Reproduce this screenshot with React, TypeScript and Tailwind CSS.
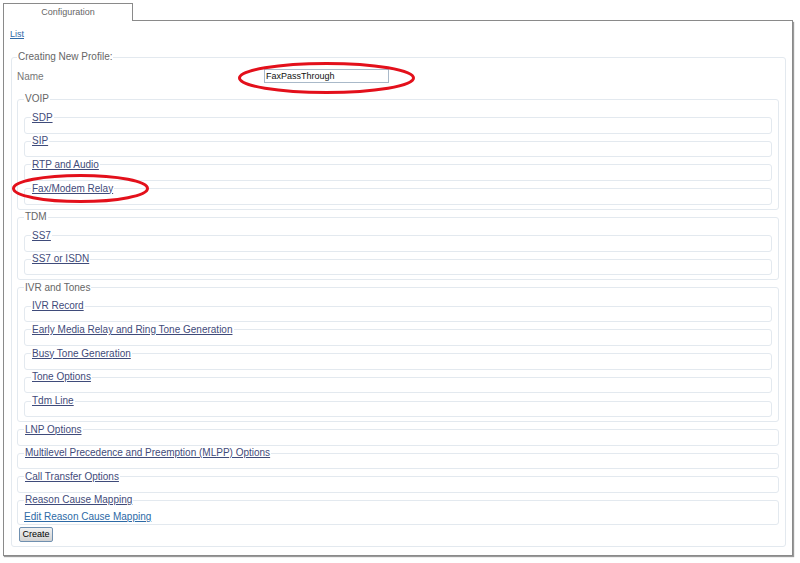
import React from "react";

const voip = ["SDP", "SIP", "RTP and Audio", "Fax/Modem Relay"];
const tdm = ["SS7", "SS7 or ISDN"];
const ivr = [
  "IVR Record",
  "Early Media Relay and Ring Tone Generation",
  "Busy Tone Generation",
  "Tone Options",
  "Tdm Line",
];

const LinkBox = ({ label }: { label: string }) => (
  <fieldset className="border border-[#e3e9ef] rounded-[3px] pl-[6px] pb-[9px]">
    <legend className="px-[1px] leading-[12px]">
      <a href="#" className="text-[#3f4b7a] underline">
        {label}
      </a>
    </legend>
  </fieldset>
);

const Group = ({ title, items }: { title: string; items: string[] }) => (
  <fieldset className="border border-[#e3e9ef] rounded-[3px] px-[6px] pt-[6.5px] pb-[4px]">
    <legend className="px-[1px] leading-[12px] text-[#666]">{title}</legend>
    <div className="flex flex-col gap-[1.7px]">
      {items.map((i) => (
        <LinkBox key={i} label={i} />
      ))}
    </div>
  </fieldset>
);

export default function App() {
  return (
    <div className="relative w-[800px] h-[563px] bg-white pl-[3px] pt-[3px] text-[10px] font-['Liberation_Sans',Arial,sans-serif]">
      <div className="flex h-[18px] w-[790px]">
        <div className="w-[130px] border border-b-0 border-[#8a8a8a] text-center text-[9px] leading-[16px] text-[#666]">
          Configuration
        </div>
        <div className="flex-1 border-b border-[#8a8a8a]" />
      </div>

      <div className="w-[790px] h-[535px] border border-t-0 border-[#8a8a8a] shadow-[1px_1px_1px_#9a9a9a] px-[6px] pt-[7px]">
        <a href="#" className="block w-fit text-[9px] leading-[12px] text-[#2f6aa8] underline">
          List
        </a>

        <fieldset className="mt-[11px] ml-[1px] border border-[#e3e9ef] rounded-[3px] pl-[5px] pr-[6px] pt-[6px] pb-[4px]">
          <legend className="px-[1px] leading-[12px] text-[#666]">Creating New Profile:</legend>

          <div className="flex h-[14px] items-center mb-[10px]">
            <span className="w-[247px] text-[#777]">Name</span>
            <input
              defaultValue="FaxPassThrough"
              className="h-[14px] w-[125px] border border-[#a9b9c9] px-[1px] text-[9px] text-[#111] outline-none"
            />
          </div>

          <div className="flex flex-col gap-[1.5px]">
            <Group title="VOIP" items={voip} />
            <Group title="TDM" items={tdm} />
            <Group title="IVR and Tones" items={ivr} />
            <div className="flex flex-col gap-[1.7px]">
              {["LNP Options", "Multilevel Precedence and Preemption (MLPP) Options", "Call Transfer Options"].map(
                (l) => (
                  <LinkBox key={l} label={l} />
                )
              )}
            </div>
            <fieldset className="border border-[#e3e9ef] rounded-[3px] pl-[6px] pt-[5px] pb-[1px]">
              <legend className="px-[1px] leading-[12px]">
                <a href="#" className="text-[#3f4b7a] underline">
                  Reason Cause Mapping
                </a>
              </legend>
              <a href="#" className="block w-fit leading-[12px] text-[#2d6aa6] underline">
                Edit Reason Cause Mapping
              </a>
            </fieldset>
            <button className="ml-[2px] h-[15px] w-[34px] rounded-[2px] border border-[#7090b0] bg-gradient-to-b from-[#f2f2f2] to-[#d2d2d2] text-[9px] leading-[12px] text-black">
              Create
            </button>
          </div>
        </fieldset>
      </div>

      <svg className="pointer-events-none absolute inset-0" width="800" height="563">
        <ellipse cx="326.5" cy="78" rx="87" ry="14.5" fill="none" stroke="#e3101b" strokeWidth="3" />
        <ellipse cx="80.5" cy="188.5" rx="67" ry="13" fill="none" stroke="#e3101b" strokeWidth="3" />
      </svg>
    </div>
  );
}
